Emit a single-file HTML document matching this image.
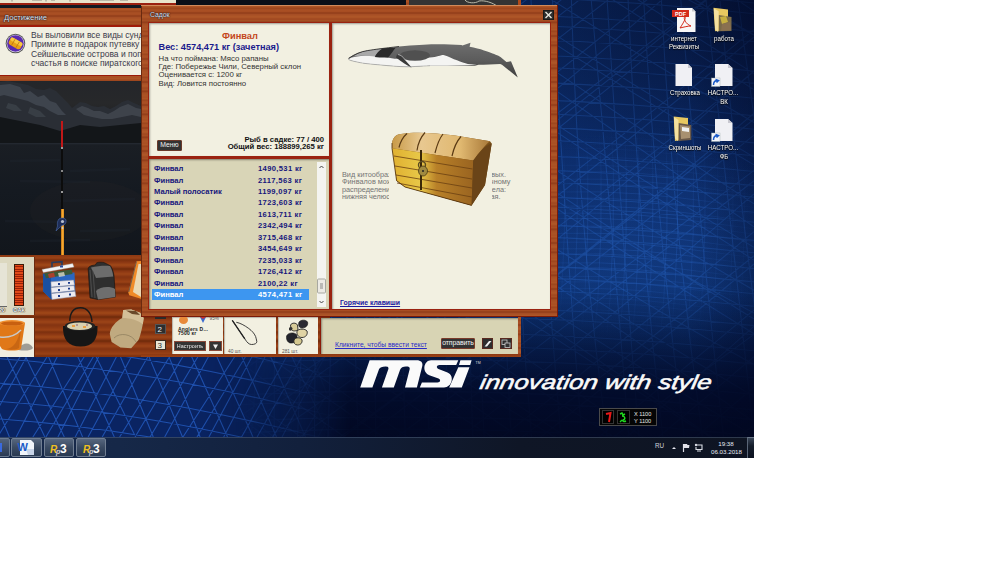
<!DOCTYPE html>
<html><head><meta charset="utf-8">
<style>
*{margin:0;padding:0;box-sizing:border-box}
html,body{width:1000px;height:562px;background:#fff;overflow:hidden;font-family:"Liberation Sans",sans-serif}
.a{position:absolute}
#scr{position:absolute;left:0;top:0;width:754px;height:458px;overflow:hidden;background:#0b2a66}
.wood{background:repeating-linear-gradient(180deg,#a84e22 0px,#b05626 2px,#9a441c 3px,#aa5024 5px,#a64c22 7px,#8a3816 8px,#a44c24 9px,#b05828 12px,#a04820 14px,#a85024 16px,#8e3a18 17px,#a64e22 19px,#ac5426 22px,#a84e22 23px)}
.woodv{background:repeating-linear-gradient(180deg,#a84e22 0px,#b05626 2px,#9a441c 3px,#aa5024 5px,#a64c22 7px,#8a3816 8px,#a44c24 9px,#b05828 12px,#a04820 14px,#a85024 16px,#8e3a18 17px,#a64e22 19px,#ac5426 22px,#a84e22 23px)}
.wood2{background:repeating-linear-gradient(180deg,#8c3812 0px,#9a4216 3px,#7c300e 5px,#8a3612 7px,#a04818 10px,#8e3a14 12px,#6e2a0a 14px,#8a3612 16px,#9c4418 19px,#843412 22px,#8c3812 24px)}
.t{white-space:nowrap;position:absolute;line-height:1}
</style></head><body>
<div id="scr">
 <!-- desktop wallpaper -->
 <div class="a" style="left:0;top:0;width:754px;height:458px;background:linear-gradient(180deg,#0a2458 0%,#0c2c6a 35%,#0d3272 70%,#0c2e6e 100%)"></div>
 <svg class="a" style="left:0;top:0" width="754" height="437"><path d="M-153.4 0 Q-194.2 220 -236.0 437 M-136.4 0 Q-169.9 220 -219.7 437 M-117.5 0 Q-150.2 220 -201.8 437 M-95.5 0 Q-133.7 220 -175.6 437 M-76.6 0 Q-101.5 220 -153.3 437 M-59.2 0 Q-86.1 220 -123.3 437 M-37.4 0 Q-66.5 220 -97.6 437 M-22.6 0 Q-43.4 220 -88.8 437 M-2.8 0 Q-34.2 220 -65.6 437 M21.5 0 Q-7.2 220 -34.1 437 M39.1 0 Q14.7 220 -14.1 437 M53.5 0 Q25.0 220 -1.5 437 M77.4 0 Q56.4 220 27.5 437 M95.7 0 Q76.3 220 48.5 437 M116.4 0 Q102.3 220 71.8 437 M133.6 0 Q117.9 220 99.4 437 M153.8 0 Q135.6 220 124.1 437 M167.9 0 Q152.8 220 137.8 437 M187.2 0 Q174.5 220 151.5 437 M210.3 0 Q203.5 220 184.7 437 M231.0 0 Q218.3 220 210.1 437 M247.8 0 Q240.5 220 226.7 437 M268.7 0 Q268.7 220 251.2 437 M286.3 0 Q273.3 220 274.3 437 M305.2 0 Q308.3 220 297.6 437 M321.3 0 Q315.8 220 314.4 437 M338.2 0 Q335.0 220 328.0 437 M357.9 0 Q349.6 220 358.1 437 M377.0 0 Q373.0 220 375.7 437 M402.0 0 Q396.9 220 405.3 437 M418.4 0 Q427.3 220 428.8 437 M439.9 0 Q440.5 220 448.9 437 M454.9 0 Q466.2 220 472.8 437 M472.2 0 Q473.3 220 484.1 437 M491.9 0 Q499.2 220 511.2 437 M511.1 0 Q512.1 220 531.5 437 M531.0 0 Q542.2 220 560.9 437 M552.5 0 Q564.4 220 581.9 437 M571.4 0 Q577.2 220 607.1 437 M591.2 0 Q611.4 220 628.9 437 M607.1 0 Q620.8 220 639.0 437 M628.1 0 Q637.7 220 662.8 437 M643.7 0 Q656.0 220 684.2 437 M661.4 0 Q672.3 220 702.5 437 M680.8 0 Q698.8 220 723.5 437 M706.0 0 Q729.6 220 754.1 437 M720.0 0 Q740.3 220 773.0 437 M738.0 0 Q767.5 220 801.4 437 M759.7 0 Q784.8 220 815.7 437 M775.8 0 Q799.7 220 836.5 437 M800.6 0 Q823.3 220 862.3 437 M820.6 0 Q850.5 220 887.0 437 M836.3 0 Q859.2 220 909.8 437 M0 -435.2 Q377 -667.0 754 -987.4 M0 -420.4 Q377 -677.1 754 -993.7 M0 -393.3 Q377 -641.7 754 -942.1 M0 -375.7 Q377 -639.6 754 -923.2 M0 -347.2 Q377 -579.5 754 -894.9 M0 -326.8 Q377 -564.8 754 -897.7 M0 -307.8 Q377 -565.0 754 -886.7 M0 -290.7 Q377 -551.7 754 -860.4 M0 -262.1 Q377 -489.2 754 -824.2 M0 -237.6 Q377 -463.2 754 -779.4 M0 -221.4 Q377 -485.3 754 -792.3 M0 -201.0 Q377 -465.8 754 -756.1 M0 -172.0 Q377 -405.0 754 -732.8 M0 -152.5 Q377 -387.5 754 -729.1 M0 -130.4 Q377 -359.9 754 -679.1 M0 -107.5 Q377 -358.6 754 -680.4 M0 -85.1 Q377 -343.5 754 -633.1 M0 -61.3 Q377 -316.5 754 -625.2 M0 -39.5 Q377 -278.3 754 -612.7 M0 -25.7 Q377 -293.2 754 -569.5 M0 3.1 Q377 -264.6 754 -543.9 M0 26.8 Q377 -215.3 754 -539.2 M0 44.5 Q377 -224.0 754 -534.9 M0 70.7 Q377 -171.8 754 -488.2 M0 92.3 Q377 -161.0 754 -452.8 M0 113.3 Q377 -151.2 754 -456.7 M0 129.9 Q377 -133.0 754 -426.6 M0 151.6 Q377 -102.5 754 -423.2 M0 180.1 Q377 -77.2 754 -381.6 M0 198.8 Q377 -31.0 754 -364.3 M0 224.2 Q377 -25.7 754 -334.5 M0 242.2 Q377 -31.8 754 -320.2 M0 260.8 Q377 -14.0 754 -287.2 M0 282.7 Q377 31.4 754 -268.3 M0 308.6 Q377 49.9 754 -250.7 M0 330.6 Q377 94.8 754 -245.2 M0 352.6 Q377 90.0 754 -216.3 M0 376.7 Q377 127.1 754 -180.8 M0 398.6 Q377 169.2 754 -163.7 M0 419.1 Q377 169.4 754 -140.4 M0 441.9 Q377 189.5 754 -116.7 M0 461.8 Q377 233.9 754 -90.3 M0 487.8 Q377 259.9 754 -81.9 M0 506.6 Q377 278.8 754 -39.8 M0 524.4 Q377 255.5 754 -37.9 M0 545.7 Q377 282.8 754 -31.3 M0 573.7 Q377 337.9 754 29.6 M0 590.5 Q377 351.4 754 37.0 M0 612.4 Q377 381.6 754 71.1 M0 635.2 Q377 407.8 754 71.1 M0 659.9 Q377 434.4 754 113.2 M0 678.6 Q377 425.2 754 119.2 M0 702.4 Q377 437.2 754 135.1 M0 728.2 Q377 454.2 754 170.4 M0 747.4 Q377 473.3 754 180.7 M0 771.2 Q377 521.9 754 193.8 M0 796.9 Q377 561.3 754 255.7 M0 810.0 Q377 548.3 754 231.6 M0 838.8 Q377 577.3 754 264.0 M0 857.2 Q377 627.8 754 310.0 M0 877.6 Q377 610.1 754 334.4 M0 902.7 Q377 662.7 754 326.3 M0 919.6 Q377 679.0 754 356.6 M0 941.7 Q377 713.6 754 387.1 M0 971.0 Q377 700.2 754 425.3 M0 -994.3 Q377 -676.2 754 -476.2 M0 -969.6 Q377 -667.0 754 -432.5 M0 -948.3 Q377 -666.9 754 -427.2 M0 -926.6 Q377 -646.1 754 -420.2 M0 -906.5 Q377 -621.4 754 -394.0 M0 -881.9 Q377 -569.0 754 -370.4 M0 -858.0 Q377 -574.1 754 -344.1 M0 -840.8 Q377 -553.3 754 -340.2 M0 -811.7 Q377 -509.1 754 -304.1 M0 -792.3 Q377 -470.5 754 -288.0 M0 -766.8 Q377 -470.2 754 -247.0 M0 -744.7 Q377 -450.0 754 -224.4 M0 -724.1 Q377 -400.0 754 -210.4 M0 -700.7 Q377 -390.3 754 -175.2 M0 -683.0 Q377 -390.6 754 -180.8 M0 -663.7 Q377 -385.2 754 -134.1 M0 -640.4 Q377 -357.3 754 -137.1 M0 -612.6 Q377 -294.1 754 -85.8 M0 -596.2 Q377 -309.1 754 -84.5 M0 -572.4 Q377 -289.5 754 -54.6 M0 -552.4 Q377 -229.3 754 -13.5 M0 -527.5 Q377 -240.3 754 11.1 M0 -507.9 Q377 -215.1 754 -7.9 M0 -485.2 Q377 -186.5 754 34.9 M0 -465.0 Q377 -164.8 754 35.2 M0 -442.4 Q377 -162.9 754 73.6 M0 -422.6 Q377 -146.5 754 89.6 M0 -398.7 Q377 -94.4 754 122.5 M0 -371.5 Q377 -63.6 754 157.1 M0 -348.2 Q377 -53.7 754 164.8 M0 -325.2 Q377 -42.7 754 203.8 M0 -306.6 Q377 -29.4 754 226.8 M0 -282.1 Q377 24.3 754 247.3 M0 -260.9 Q377 21.1 754 260.1 M0 -242.0 Q377 74.8 754 290.2 M0 -216.7 Q377 87.5 754 319.0 M0 -196.2 Q377 113.5 754 313.0 M0 -180.7 Q377 101.0 754 333.7 M0 -158.0 Q377 158.8 754 364.4 M0 -130.7 Q377 175.6 754 396.5 M0 -110.1 Q377 165.1 754 421.8 M0 -85.5 Q377 214.6 754 435.9 M0 -64.4 Q377 213.9 754 465.1 M0 -46.5 Q377 232.2 754 464.1 M0 -19.7 Q377 265.6 754 509.9 M0 4.8 Q377 304.5 754 520.1 M0 21.8 Q377 331.0 754 552.5 M0 45.2 Q377 352.3 754 548.3 M0 62.5 Q377 350.2 754 592.2 M0 86.0 Q377 389.4 754 586.5 M0 105.6 Q377 394.0 754 632.5 M0 133.9 Q377 442.7 754 645.6 M0 154.2 Q377 452.4 754 672.8 M0 172.2 Q377 491.9 754 680.2 M0 202.8 Q377 524.6 754 703.5 M0 219.6 Q377 535.6 754 758.3 M0 241.5 Q377 529.9 754 749.9 M0 268.5 Q377 554.0 754 791.7 M0 282.4 Q377 583.6 754 820.5 M0 304.3 Q377 620.3 754 824.7 M0 333.9 Q377 644.0 754 843.1 M0 356.0 Q377 655.3 754 857.0 M0 369.0 Q377 668.6 754 887.1 M0 394.0 Q377 676.1 754 907.8 M0 416.2 Q377 733.2 754 916.2 M0 442.5 Q377 759.5 754 947.3 M0 466.3 Q377 776.9 754 1002.3 M0 481.9 Q377 775.5 754 997.6 M0 511.0 Q377 815.4 754 1025.4 M0 527.3 Q377 816.0 754 1029.2 M0 -10.4 Q377 -55.4 754 -15.4 M0 8.0 Q377 -37.0 754 3.0 M0 18.7 Q377 -26.3 754 13.7 M0 36.6 Q377 -8.4 754 31.6 M0 46.5 Q377 1.5 754 41.5 M0 60.6 Q377 15.6 754 55.6 M0 76.1 Q377 31.1 754 71.1 M0 88.1 Q377 43.1 754 83.1 M0 103.2 Q377 58.2 754 98.2 M0 120.7 Q377 75.7 754 115.7 M0 134.3 Q377 89.3 754 129.3 M0 147.9 Q377 102.9 754 142.9 M0 160.8 Q377 115.8 754 155.8 M0 176.5 Q377 131.5 754 171.5 M0 190.6 Q377 145.6 754 185.6 M0 202.3 Q377 157.3 754 197.3 M0 217.3 Q377 172.3 754 212.3 M0 227.3 Q377 182.3 754 222.3 M0 245.4 Q377 200.4 754 240.4 M0 257.7 Q377 212.7 754 252.7 M0 273.5 Q377 228.5 754 268.5 M0 286.9 Q377 241.9 754 281.9 M0 298.7 Q377 253.7 754 293.7 M0 311.3 Q377 266.3 754 306.3 M0 330.6 Q377 285.6 754 325.6 M0 339.8 Q377 294.8 754 334.8 M0 355.8 Q377 310.8 754 350.8 M0 369.1 Q377 324.1 754 364.1 M0 382.8 Q377 337.8 754 377.8 M0 399.4 Q377 354.4 754 394.4 M0 414.9 Q377 369.9 754 409.9 M0 424.6 Q377 379.6 754 419.6 M0 440.9 Q377 395.9 754 435.9 M0 452.8 Q377 407.8 754 447.8 M0 468.3 Q377 423.3 754 463.3 M0 481.4 Q377 436.4 754 476.4" stroke="#2a66c8" stroke-width="1.1" fill="none" opacity=".34"/></svg>
 <svg class="a" style="left:0;top:0;-webkit-mask-image:radial-gradient(ellipse 140px 110px at 640px 235px,#000 30%,transparent 100%);mask-image:radial-gradient(ellipse 140px 110px at 640px 235px,#000 30%,transparent 100%)" width="754" height="437"><path d="M521 110.4 Q600 104.4 680 114.4 T754 124.4 M521 117.7 Q600 111.7 680 121.7 T754 131.7 M521 124.9 Q600 118.9 680 128.9 T754 138.9 M521 132.3 Q600 126.3 680 136.3 T754 146.3 M521 138.7 Q600 132.7 680 142.7 T754 152.7 M521 146.3 Q600 140.3 680 150.3 T754 160.3 M521 150.6 Q600 144.6 680 154.6 T754 164.6 M521 158.9 Q600 152.9 680 162.9 T754 172.9 M521 167.3 Q600 161.3 680 171.3 T754 181.3 M521 173.4 Q600 167.4 680 177.4 T754 187.4 M521 181.2 Q600 175.2 680 185.2 T754 195.2 M521 185.8 Q600 179.8 680 189.8 T754 199.8 M521 193.9 Q600 187.9 680 197.9 T754 207.9 M521 200.2 Q600 194.2 680 204.2 T754 214.2 M521 208.1 Q600 202.1 680 212.1 T754 222.1 M521 215.2 Q600 209.2 680 219.2 T754 229.2 M521 220.5 Q600 214.5 680 224.5 T754 234.5 M521 228.2 Q600 222.2 680 232.2 T754 242.2 M521 235.3 Q600 229.3 680 239.3 T754 249.3 M521 244.2 Q600 238.2 680 248.2 T754 258.2 M521 250.8 Q600 244.8 680 254.8 T754 264.8 M521 256.0 Q600 250.0 680 260.0 T754 270.0 M521 264.9 Q600 258.9 680 268.9 T754 278.9 M521 269.9 Q600 263.9 680 273.9 T754 283.9 M521 278.4 Q600 272.4 680 282.4 T754 292.4 M521 283.9 Q600 277.9 680 287.9 T754 297.9 M521 290.5 Q600 284.5 680 294.5 T754 304.5 M521 300.1 Q600 294.1 680 304.1 T754 314.1 M521 305.1 Q600 299.1 680 309.1 T754 319.1 M521 312.1 Q600 306.1 680 316.1 T754 326.1 M521 321.4 Q600 315.4 680 325.4 T754 335.4 M521 328.1 Q600 322.1 680 332.1 T754 342.1 M521 333.4 Q600 327.4 680 337.4 T754 347.4 M521 342.4 Q600 336.4 680 346.4 T754 356.4 M521 348.1 Q600 342.1 680 352.1 T754 362.1 M521 355.5 Q600 349.5 680 359.5 T754 369.5 M519.8 110 Q527.8 230 513.8 360 M535.8 110 Q543.8 230 529.8 360 M547.8 110 Q555.8 230 541.8 360 M561.9 110 Q569.9 230 555.9 360 M574.6 110 Q582.6 230 568.6 360 M585.2 110 Q593.2 230 579.2 360 M598.4 110 Q606.4 230 592.4 360 M610.7 110 Q618.7 230 604.7 360 M623.6 110 Q631.6 230 617.6 360 M636.3 110 Q644.3 230 630.3 360 M650.2 110 Q658.2 230 644.2 360 M664.4 110 Q672.4 230 658.4 360 M675.0 110 Q683.0 230 669.0 360 M690.7 110 Q698.7 230 684.7 360 M702.4 110 Q710.4 230 696.4 360 M715.2 110 Q723.2 230 709.2 360 M730.3 110 Q738.3 230 724.3 360 M741.9 110 Q749.9 230 735.9 360 M754.3 110 Q762.3 230 748.3 360 M767.9 110 Q775.9 230 761.9 360" stroke="#2a62c0" stroke-width="1" fill="none" opacity=".3"/></svg>
 <div class="a" style="left:0;top:350px;width:340px;height:87px;overflow:hidden;background:#0a2462;-webkit-mask-image:linear-gradient(90deg,#000 0,#000 230px,transparent 340px);mask-image:linear-gradient(90deg,#000 0,#000 230px,transparent 340px)"><svg class="a" style="left:0;top:-350px" width="340" height="437"><path d="M-90.3 437 L-39.6 350 M-72.5 437 L-22.9 350 M-60.0 437 L-8.9 350 M-46.9 437 L3.3 350 M-29.2 437 L24.3 350 M-17.4 437 L30.2 350 M-2.5 437 L51.3 350 M16.2 437 L60.7 350 M32.9 437 L88.5 350 M45.9 437 L97.3 350 M57.9 437 L102.1 350 M75.2 437 L119.9 350 M88.1 437 L135.0 350 M102.2 437 L151.7 350 M119.6 437 L173.8 350 M135.1 437 L186.8 350 M150.0 437 L201.9 350 M164.7 437 L212.1 350 M183.0 437 L238.9 350 M197.0 437 L249.5 350 M208.9 437 L255.6 350 M223.7 437 L268.6 350 M241.6 437 L290.4 350 M257.1 437 L305.7 350 M272.7 437 L326.9 350 M282.0 437 L328.5 350 M302.5 437 L352.1 350 M317.9 437 L366.7 350 M327.4 437 L379.0 350 M346.7 437 L393.9 350 M357.5 437 L405.5 350 M377.8 437 L430.9 350 M387.7 437 L434.7 350 M402.6 437 L447.3 350 M421.8 437 L467.9 350 M435.4 437 L484.7 350 M-98.5 350 L-58.2 437 M-75.0 350 L-35.5 437 M-51.1 350 L-13.9 437 M-26.3 350 L9.4 437 M3.8 350 L44.8 437 M22.4 350 L64.3 437 M45.7 350 L82.6 437 M74.8 350 L114.3 437 M92.8 350 L135.7 437 M117.7 350 L153.3 437 M146.2 350 L182.5 437 M166.4 350 L200.1 437 M188.7 350 L227.5 437 M213.9 350 L253.0 437 M239.0 350 L276.5 437 M267.7 350 L305.5 437 M288.6 350 L330.3 437 M309.5 350 L344.0 437 M339.3 350 L380.4 437 M358.0 350 L392.9 437 M385.9 350 L428.3 437 M405.6 350 L448.1 437 M435.1 350 L474.1 437 M455.4 350 L489.4 437 M-10 276.3 Q150 286.3 340 336.3 M-10 303.7 Q150 313.7 340 363.7 M-10 317.9 Q150 327.9 340 377.9 M-10 341.6 Q150 351.6 340 401.6 M-10 358.1 Q150 368.1 340 418.1 M-10 382.6 Q150 392.6 340 442.6 M-10 400.8 Q150 410.8 340 460.8 M-10 418.3 Q150 428.3 340 478.3 M-10 437.4 Q150 447.4 340 497.4 M-10 461.8 Q150 471.8 340 521.8 M-10 476.6 Q150 486.6 340 536.6" stroke="#2d6ee0" stroke-width="1.1" fill="none" opacity=".6"/></svg></div>
 <div class="a" style="left:0;top:0;width:754px;height:437px;background:radial-gradient(ellipse 180px 120px at 640px 250px,rgba(40,100,200,.16),rgba(40,100,200,0)),radial-gradient(ellipse 280px 200px at 754px 0px,rgba(0,5,30,.55),rgba(0,5,30,0)),linear-gradient(90deg,rgba(0,5,30,0) 0,rgba(0,5,30,0) 690px,rgba(0,5,30,.35) 754px)"></div>
 <div class="a" style="left:200px;top:290px;width:554px;height:147px;background:linear-gradient(180deg,rgba(1,6,32,0) 0,rgba(1,6,32,.55) 60px,rgba(1,6,32,.85) 100px,rgba(1,5,28,.92) 147px);-webkit-mask-image:linear-gradient(90deg,transparent 0,rgba(0,0,0,.6) 100px,#000 150px);mask-image:linear-gradient(90deg,transparent 0,rgba(0,0,0,.6) 100px,#000 150px)"></div>

 <!-- game window -->
 <div id="game" class="a" style="left:0;top:0;width:521px;height:357px;overflow:hidden">
  <!-- top strip -->
  <div class="a" style="left:0;top:0;width:176px;height:3px;background:#e9e5cc"></div>
  <svg class="a" style="left:0;top:0" width="176" height="3"><path d="M12 0 v1.5 M32 0 h10 M46 0 v1.5 M51 0 h4 M70 0 v1.6 M90 0 h24 M120 0 h8" stroke="#555" stroke-width="1" opacity=".6"/></svg>
  <div class="a" style="left:0;top:3px;width:176px;height:2px;background:#9a2010"></div>
  <div class="a" style="left:176px;top:0;width:230px;height:5px;background:#0b0f18"></div>
  <div class="a woodv" style="left:406px;top:0;width:3px;height:5px"></div>
  <div class="a" style="left:409px;top:0;width:109px;height:5px;background:#343434"></div>
  <svg class="a" style="left:409px;top:0" width="109" height="6"><path d="M56 0 C58 3 66 4 70 1 C76 0 84 3 88 6" stroke="#b8b8a8" stroke-width="1" fill="none"/></svg>
  <div class="a" style="left:518px;top:0;width:3px;height:5px;background:#b04a1a"></div>
  <div class="a" style="left:0;top:5px;width:176px;height:3px;background:#121a22"></div>
  <!-- achievement -->
  <div class="a wood" style="left:0;top:8px;width:330px;height:73px"></div>
  <div class="t" style="left:4px;top:13.5px;font-size:7.6px;color:#e8e8ea;text-shadow:0 0 1px #1a1a2a,0 0 1px #1a1a2a,0 0 1.5px #1a1a2a">Достижение</div>
  <div class="a" style="left:0;top:25px;width:330px;height:2px;background:#a01a08"></div>
  <div class="a" style="left:0;top:27px;width:330px;height:48px;background:#f1efe2"></div>
  <div class="a" style="left:0;top:75px;width:330px;height:1px;background:#9a1a08"></div>
  <svg class="a" style="left:4px;top:32px" width="23" height="23">
   <circle cx="11.45" cy="11.45" r="10.3" fill="#f4f2e6"/>
   <circle cx="11.45" cy="11.45" r="9.8" fill="#5a5a5a"/>
   <circle cx="11.45" cy="11.45" r="8.8" fill="#e8e4f0"/>
   <circle cx="11.45" cy="11.45" r="8.3" fill="#5a2ab0"/>
   <g transform="rotate(30 11.45 11.45)"><rect x="4.8" y="7.6" width="13.4" height="7.8" rx="3" fill="#e8a018"/><rect x="4.8" y="7.6" width="13.4" height="3.6" rx="1.8" fill="#f8c840"/><path d="M9 8 v7 M14 8 v7" stroke="#b87010" stroke-width=".7"/></g>
  </svg>
  <div class="t" style="left:31px;top:31px;font-size:8.5px;line-height:9.35px;color:#3a3a4a">Вы выловили все виды сундуков!<br>Примите в подарок путевку на<br>Сейшельские острова и попытайте<br>счастья в поиске пиратского клада.</div>
  <!-- game scene -->
  <div class="a" style="left:0;top:81px;width:141px;height:174px;background:linear-gradient(180deg,#24262a 0,#27282a 22px,#1c1e22 45px,#131518 62px,#1a1e24 64px,#151a21 110px,#12161c 174px)"></div>
  <svg class="a" style="left:0;top:81px" width="141" height="174">
   <path d="M0 1 L8 0 L18 2 L28 4 L36 8 L44 9 L50 7 L56 10 L62 16 L68 22 L72 27 L76 24 L80 21 L86 22 L92 25 L98 26 L104 25 L110 28 L116 25 L122 21 L128 19 L134 22 L141 25 L141 62 L0 62Z" fill="#2a2e35"/>
   <path d="M0 4 L10 3 L20 6 L24 12 L30 10 L38 16 L44 14 L50 20 L56 22 L62 30 L66 34 L58 34 L50 30 L44 26 L36 24 L28 20 L20 18 L12 16 L4 14 L0 15Z" fill="#464c55" opacity=".75"/>
   <path d="M8 22 L16 24 L22 30 L14 30 L6 27Z M30 26 L40 30 L46 36 L36 36 L28 32Z" fill="#3c424a" opacity=".8"/>
   <path d="M76 28 L82 25 L88 27 L94 30 L100 30 L108 33 L114 30 L120 26 L128 23 L136 27 L141 28 L141 36 L132 34 L122 36 L112 38 L102 38 L92 36 L84 34Z" fill="#474d56" opacity=".7"/>
   <path d="M0 36 L20 40 L40 44 L60 50 L80 44 L100 46 L120 44 L141 42 L141 62 L0 62Z" fill="#131619"/>
   <rect x="0" y="62" width="141" height="1.5" fill="#232830"/>
   <ellipse cx="90" cy="130" rx="60" ry="30" fill="#3a3028" opacity=".12"/><path d="M10 80 L60 79 M70 90 L130 88 M20 100 L90 101 M60 120 L135 118 M5 140 L70 141 M80 150 L130 149 M30 160 L90 159" stroke="#1f2630" stroke-width="2.5" opacity=".35"/>
  </svg>
  <!-- rod -->
  <div class="a" style="left:61px;top:121px;width:1.6px;height:26px;background:#c01818"></div>
  <div class="a" style="left:61px;top:147px;width:1.6px;height:62px;background:#0c0c0c"></div>
  <div class="a" style="left:60.5px;top:147px;width:2.5px;height:2px;background:#999"></div>
  <div class="a" style="left:60.5px;top:170px;width:2.5px;height:2px;background:#888"></div>
  <div class="a" style="left:60.5px;top:191px;width:2.5px;height:2px;background:#999"></div>
  <div class="a" style="left:60.6px;top:209px;width:3px;height:46px;background:linear-gradient(90deg,#c07010,#f4a830,#d88a20)"></div>
  <svg class="a" style="left:53px;top:216px" width="16" height="18"><path d="M6 3 C8 1.5 12 1.5 13 4 C13.5 7 12 9 9 9.5 L6 12 L3 15 L4.5 10 C4 7 4.5 5 6 3Z" fill="#1e2e5a" stroke="#4a6aa8" stroke-width=".6"/><circle cx="9.5" cy="5.5" r="1.6" fill="#b8c0d0"/><circle cx="9.5" cy="12" r="1" fill="#ccc"/></svg>
  <!-- shelf -->
  <div class="a wood2" style="left:0;top:255px;width:330px;height:102px"></div>
  <div class="a" style="left:0;top:257px;width:34.3px;height:58px;background:#dcd8c0;box-shadow:1px 0 0 #6a2a10"></div>
  <div class="a" style="left:0;top:263.3px;width:6.5px;height:43.5px;background:#e6e4d6;border-bottom:1px solid #666"></div>
  <div class="a" style="left:14.4px;top:264.2px;width:9.6px;height:41.7px;border:1px solid #3a1a08;background:repeating-linear-gradient(180deg,#e04a18 0 1.4px,#9a2008 1.4px 2.4px)"></div>
  <div class="t" style="left:-1px;top:307.6px;font-size:5.6px;color:#fff;font-weight:bold;text-shadow:0 0 1px #000,0 0 1px #000">20</div>
  <div class="t" style="left:13.2px;top:307.6px;font-size:5.6px;color:#fff;font-weight:bold;text-shadow:0 0 1px #000,0 0 1px #000">ОАК</div>
  <div class="a" style="left:0;top:318px;width:34.3px;height:38.8px;background:#f0eee0;box-shadow:1px 0 0 #6a2a10"></div>
  <svg class="a" style="left:0;top:318px" width="35" height="39">
   <path d="M18 30 C24 24 30 24 33 30 C31 33 24 33 18 32Z" fill="#5a5a5a" opacity=".55"/>
   <path d="M0 5 L25 5 L21 31 C18 33 6 33 2 31 L0 28Z" fill="#e07818"/>
   <path d="M21 9 L19 30 C16 32 10 32 6 31 C14 30 18 24 21 9Z" fill="#b85a10" opacity=".6"/>
   <ellipse cx="12" cy="5" rx="13" ry="3" fill="#f09030"/>
   <ellipse cx="12" cy="5.5" rx="11" ry="2" fill="#c86010"/>
   <path d="M0 19 C8 20 16 17 21 12" stroke="#c8c8c8" stroke-width="1.6" fill="none"/>
  </svg>
  <!-- items -->
  <svg class="a" style="left:40px;top:258px" width="105" height="95">
   <!-- tackle box -->
   <path d="M12 10 L12 4.5 L22 3.6 L22 9" stroke="#2a3a5a" stroke-width="1.6" fill="none"/>
   <path d="M2.9 15.8 L34.5 14.5 L35.4 35.4 L11.4 41.6 L3.3 33.6Z" fill="#2a66c0"/>
   <path d="M2.9 15.8 L11 17 L11.4 41.6 L3.3 33.6Z" fill="#1a50a0"/>
   <path d="M4.2 15 L31.8 11.4 L32.5 16 L6 20.3Z" fill="#3a5a3a"/>
   <path d="M8 16 L14 14.5 L15 19 L9 20Z" fill="#c83a2a" opacity=".8"/>
   <path d="M18 15 L24 14 L25 18 L19 19Z" fill="#d8d8c8" opacity=".8"/>
   <path d="M2 11.4 L32.7 5.6 L34 9.1 L3.3 14.5Z" fill="#f4f4f6" stroke="#999" stroke-width=".4"/>
   <rect x="20" y="7.5" width="3" height="2" fill="#2a4a9a"/>
   <path d="M10.9 23.8 L33.6 22 L34.5 27 L11.2 29Z M11 29.6 L34 27.6 L34.8 32.6 L11.4 35Z M11.4 35.6 L35 33.2 L36 38.4 L12 41.5Z" fill="#ececf2" stroke="#8a8a9a" stroke-width=".5"/>
   <path d="M18 26 h2 M28 24.8 h2 M18 32 h2 M28 30.6 h2 M18 38 h2 M29 36.5 h2" stroke="#1a3a8a" stroke-width="1.8"/>
   <!-- backpack -->
   <path d="M48.2 11.4 C48 9 50 7.5 55.4 6.9 C56 5 57 4.2 60 4.2 C62 4.2 64 4.4 64.3 4.7 L70.5 7.8 C72 10 73.5 14 74 17.6 L75.4 39 L58 41.6 L50 39.9 Z" fill="#2e2e2e" stroke="#111" stroke-width=".6"/>
   <path d="M51 9.6 C58 7.6 66 7.4 70 8 C72 12 73 15 73.2 18.5 L56 20 C54 15 52 12 51 9.6Z" fill="#6c6c6c"/>
   <path d="M56 33 C60 28.5 70 28 75 31 L75.4 39 L58 41.6 Z" fill="#6e6e6e"/>
   <path d="M50 12 L52 39 M53 13 L55 40" stroke="#555" stroke-width=".8"/>
   <!-- notebook -->
   <path d="M88.3 34.5 L96.3 3.3 L101 2.9 L101 40.7 L89.2 37.2Z" fill="#f08a28"/>
   <path d="M93 34 L98.5 6 L101 6 L101 39 Z" fill="#ead8b4"/>
   <path d="M88.8 34 L96.5 3.5" stroke="#555" stroke-width=".8"/>
   <!-- cauldron -->
   <path d="M29.8 63.1 C30 54 34 49.8 40.5 49.8 C47 49.8 51.5 55 52 64" stroke="#1a1a1a" stroke-width="1.4" fill="none"/>
   <path d="M23 68 C22.5 81 28 88.5 40.5 88.5 C53 88.5 58 81 57.5 68 Z" fill="#161616"/>
   <ellipse cx="40" cy="68" rx="15.2" ry="4.9" fill="#222"/>
   <ellipse cx="39.5" cy="68.3" rx="12.5" ry="3.8" fill="#d8d0b0"/>
   <path d="M32 68 h3 M43 69 h3" stroke="#f09020" stroke-width="1.4"/>
   <path d="M36 67 h2 M46 67 h2" stroke="#8a5a7a" stroke-width="1.2"/>
   <!-- sack -->
   <path d="M69.8 76 C70 70 76 63 82.3 60 L83.2 52 L91.2 51.6 L100.1 54.7 L103.7 60 L102.8 66.3 C101 75 99 82 98.3 82.3 L91.2 90.3 L80.5 89.4 L71.6 84 Z" fill="#c0aa80"/>
   <path d="M83.2 52 L91.2 51.6 L100.1 54.7 L103.7 60 L102.8 66.3 C98 62 90 60 82.3 60Z" fill="#d4c098"/>
   <path d="M86 52.5 L96 53 L100 57 L92 56Z" fill="#6a4a2a"/>
   <path d="M74 80 C80 74 92 76 96 84" stroke="#8a7a5a" stroke-width=".7" fill="none"/>
  </svg>
  <!-- below sadok: buttons & tackle panels -->
  <div class="a" style="left:155px;top:317px;width:11px;height:2px;background:#2a2a2a"></div>
  <div class="a" style="left:155px;top:324px;width:11px;height:10px;background:#2e2e2e;border:1px solid #555"></div>
  <div class="t" style="left:157.5px;top:325.5px;font-size:8px;color:#eee">2</div>
  <div class="a" style="left:155px;top:340px;width:11px;height:10px;background:#e8e6d6;border:1px solid #3a2a20"></div>
  <div class="t" style="left:157.5px;top:341.5px;font-size:8px;color:#333">3</div>
  <div class="a" style="left:171.8px;top:316.8px;width:51.6px;height:37px;background:#f2f0e1;box-shadow:inset 1px 1px 1px rgba(0,0,0,.25)"></div>
  <div class="a" style="left:224.2px;top:316.8px;width:51.6px;height:37px;background:#f2f0e1;box-shadow:inset 1px 1px 1px rgba(0,0,0,.25)"></div>
  <div class="a" style="left:278.1px;top:316.8px;width:40px;height:37px;background:#f2f0e1;box-shadow:inset 1px 1px 1px rgba(0,0,0,.25)"></div>
  <div class="a" style="left:179px;top:316px;width:9px;height:8px;border-radius:50%;background:#e88a3a"></div>
  <svg class="a" style="left:199px;top:316px" width="8" height="8"><path d="M1 1 L7 1 L4 7Z" fill="#3a6ad0"/><path d="M1 1 L7 1 L4 3Z" fill="#c83030"/></svg>
  <div class="t" style="left:209.6px;top:317px;font-size:4.6px;color:#555">95%</div>
  <div class="t" style="left:178px;top:326.5px;font-size:5px;font-weight:bold;color:#1a1a1a;line-height:4.8px;letter-spacing:.2px">Anglers D...<br>7500 кг</div>
  <div class="a" style="left:174.2px;top:340.5px;width:32px;height:10.5px;background:#333;border:1px solid #8a4a3a"></div>
  <div class="t" style="left:174.2px;top:342.6px;width:32px;text-align:center;font-size:6px;color:#eee;transform:scaleX(.9)">Настроить</div>
  <div class="a" style="left:209.3px;top:340.5px;width:12.3px;height:10.5px;background:#333;border:1px solid #8a4a3a"></div>
  <svg class="a" style="left:209.3px;top:340.5px" width="13" height="11"><path d="M4 3.5 L9 3.5 L6.5 8Z" fill="#eee"/></svg>
  <svg class="a" style="left:224px;top:316px" width="52" height="38"><path d="M8.3 4.3 L20.8 22.8 C23 26.5 25 28.5 27.6 28.5 C30.5 28.5 33 27.5 32.8 25.5 C32.5 23.5 32 22 31.6 20.5 C30 17 28 15 24.8 12.5 C20 9 16 7 12.3 6.3" stroke="#2a2a2a" stroke-width=".9" fill="none"/><path d="M8.3 4.3 L20.8 22.8" stroke="#222" stroke-width="1.3"/></svg>
  <div class="t" style="left:228px;top:349.8px;font-size:4.8px;color:#555">40 шт.</div>
  <svg class="a" style="left:277px;top:317px" width="43" height="37">
   <path d="M22 5 C24 2.5 29 2.5 30.5 5 C31.5 8 29 11 25 11 C22 11 21 8 22 5Z" fill="#2a2a32" stroke="#111" stroke-width=".6"/>
   <path d="M13.5 8 C15 5.5 19 5.5 20.5 8 L21 12.5 C19 14.5 15 14.5 14 12Z" fill="#d8cc98" stroke="#222" stroke-width=".9"/>
   <path d="M20 14 C22 11.5 28 11.5 30 14 C31 17 29 20.5 25 20.5 C21 20.5 19.5 17 20 14Z" fill="#e0d4a4" stroke="#222" stroke-width=".9"/>
   <path d="M9.6 19 C11 15.5 17 15 19.5 17.5 C21 21 19.5 25.5 15 26 C11 26.5 9 23 9.6 19Z" fill="#22242c" stroke="#111" stroke-width=".6"/>
   <path d="M17 23 C18.5 20 23.5 20 25 23 C25.5 26 23.5 28 20.5 28 C17.5 28 16.5 25.5 17 23Z" fill="#d4c890" stroke="#222" stroke-width=".9"/>
   <path d="M12 11 C13 9.5 15 9.5 15.5 11.5 C15.5 13.5 13 14.5 12 13Z" fill="#333"/>
  </svg>
  <div class="t" style="left:282px;top:349.8px;font-size:4.8px;color:#555">281 шт.</div>
  <!-- chat -->
  <div class="a" style="left:320px;top:317px;width:1px;height:38px;background:#8a1a08"></div>
  <div class="a" style="left:321px;top:317.5px;width:197px;height:37.5px;background:#d8d4b4;box-shadow:inset 1px 1px 2px rgba(0,0,0,.35)"></div>
  <div class="a wood" style="left:518px;top:317px;width:3px;height:40px"></div>
  <div class="a wood2" style="left:141px;top:354px;width:380px;height:3px"></div>
  <div class="t" style="left:335px;top:342px;font-size:6.7px;color:#2a2ac8;text-decoration:underline">Кликните, чтобы ввести текст</div>
  <div class="a" style="left:441px;top:338px;width:34px;height:11px;background:#333;border:1px solid #7a3a2a;border-radius:1px"></div>
  <div class="t" style="left:441px;top:339.8px;width:34px;text-align:center;font-size:6.9px;color:#f4f4f4;letter-spacing:-.1px">отправить</div>
  <div class="a" style="left:481.5px;top:338px;width:11.5px;height:11px;background:#2e2e2e;border:1px solid #5a2a20"></div>
  <svg class="a" style="left:481.5px;top:338px" width="12" height="11"><path d="M2.5 8.5 L7 3 L9.5 3 L5 8.5Z" fill="#f0f0f0"/></svg>
  <div class="a" style="left:500px;top:338px;width:12px;height:11px;background:#2e2e2e;border:1px solid #5a2a20"></div>
  <svg class="a" style="left:500px;top:338px" width="12" height="11"><rect x="2" y="2" width="5" height="4.5" fill="none" stroke="#ccc" stroke-width=".8"/><rect x="5" y="5" width="5" height="4.5" fill="#333" stroke="#ccc" stroke-width=".8"/></svg>

 </div>

 <!-- Sadok window -->
 <div id="sadok" class="a wood" style="left:141px;top:5px;width:417px;height:312px;box-shadow:inset -1px 0 0 #7a1a08, inset 0 -1px 0 #7a1a08, inset 0 1px 0 #d08a5a, inset 1px 0 0 #6a2a10">
  <div class="t" style="left:9px;top:7px;font-size:6.8px;color:#e4e4ea;text-shadow:0 0 1px #1a1a2a,0 0 1px #1a1a2a,0 0 1.5px #1a1a2a">Садок</div>
  <div class="a" style="left:402px;top:5px;width:11px;height:10px;background:#2e2e2e;border:1px solid #1a1a1a"></div>
  <svg class="a" style="left:402px;top:5px" width="11" height="10"><path d="M2.5 2 L8.5 8 M8.5 2 L2.5 8" stroke="#e8e8e0" stroke-width="1.4"/></svg>
  <div class="a" style="left:7px;top:17px;width:403px;height:288px;background:#9a2210"></div>
  <div class="a" style="left:8px;top:18px;width:180px;height:133px;background:#f2f0e1;box-shadow:inset 1px 1px 2px rgba(0,0,0,.35)"></div>
  <div class="a" style="left:8px;top:154px;width:180px;height:150px;background:#d9d5b7;box-shadow:inset 1px 1px 2px rgba(0,0,0,.4)"></div>
  <div class="a" style="left:191px;top:18px;width:218px;height:286px;background:#f2f0e1;box-shadow:inset 1px 1px 2px rgba(0,0,0,.35)"></div>
  <!-- info -->
  <div class="t" style="left:81px;top:26.5px;font-size:9.3px;font-weight:bold;color:#c4461a">Финвал</div>
  <div class="t" style="left:17.5px;top:37.5px;font-size:9.2px;font-weight:bold;color:#1a1a8c">Вес: 4574,471 кг (зачетная)</div>
  <div class="t" style="left:17.5px;top:49.5px;font-size:7.8px;line-height:8.4px;color:#333">На что поймана: Мясо рапаны<br>Где: Побережье Чили, Северный склон<br>Оценивается с: 1200 кг<br>Вид: Ловится постоянно</div>
  <div class="a" style="left:16px;top:134.5px;width:25px;height:11px;background:#333;border:1px solid #6a3a2a;border-radius:1px"></div>
  <div class="t" style="left:16px;top:136.6px;width:25px;text-align:center;font-size:6.8px;color:#f0f0f0">Меню</div>
  <div class="t" style="right:234px;top:131px;font-size:7.7px;line-height:7.2px;font-weight:bold;color:#111;text-align:right">Рыб в садке: 77 / 400<br>Общий вес: 188899,265 кг</div>
  <!-- list -->
  <div class="t" style="left:13px;top:160.0px;font-size:7.6px;font-weight:bold;color:#16167c">Финвал</div><div class="t" style="left:117px;top:160.0px;font-size:7.6px;font-weight:bold;color:#16167c;letter-spacing:.35px">1490,531 кг</div><div class="t" style="left:13px;top:171.5px;font-size:7.6px;font-weight:bold;color:#16167c">Финвал</div><div class="t" style="left:117px;top:171.5px;font-size:7.6px;font-weight:bold;color:#16167c;letter-spacing:.35px">2117,563 кг</div><div class="t" style="left:13px;top:183.0px;font-size:7.6px;font-weight:bold;color:#16167c">Малый полосатик</div><div class="t" style="left:117px;top:183.0px;font-size:7.6px;font-weight:bold;color:#16167c;letter-spacing:.35px">1199,097 кг</div><div class="t" style="left:13px;top:194.4px;font-size:7.6px;font-weight:bold;color:#16167c">Финвал</div><div class="t" style="left:117px;top:194.4px;font-size:7.6px;font-weight:bold;color:#16167c;letter-spacing:.35px">1723,603 кг</div><div class="t" style="left:13px;top:205.9px;font-size:7.6px;font-weight:bold;color:#16167c">Финвал</div><div class="t" style="left:117px;top:205.9px;font-size:7.6px;font-weight:bold;color:#16167c;letter-spacing:.35px">1613,711 кг</div><div class="t" style="left:13px;top:217.4px;font-size:7.6px;font-weight:bold;color:#16167c">Финвал</div><div class="t" style="left:117px;top:217.4px;font-size:7.6px;font-weight:bold;color:#16167c;letter-spacing:.35px">2342,494 кг</div><div class="t" style="left:13px;top:228.9px;font-size:7.6px;font-weight:bold;color:#16167c">Финвал</div><div class="t" style="left:117px;top:228.9px;font-size:7.6px;font-weight:bold;color:#16167c;letter-spacing:.35px">3715,468 кг</div><div class="t" style="left:13px;top:240.4px;font-size:7.6px;font-weight:bold;color:#16167c">Финвал</div><div class="t" style="left:117px;top:240.4px;font-size:7.6px;font-weight:bold;color:#16167c;letter-spacing:.35px">3454,649 кг</div><div class="t" style="left:13px;top:251.8px;font-size:7.6px;font-weight:bold;color:#16167c">Финвал</div><div class="t" style="left:117px;top:251.8px;font-size:7.6px;font-weight:bold;color:#16167c;letter-spacing:.35px">7235,033 кг</div><div class="t" style="left:13px;top:263.3px;font-size:7.6px;font-weight:bold;color:#16167c">Финвал</div><div class="t" style="left:117px;top:263.3px;font-size:7.6px;font-weight:bold;color:#16167c;letter-spacing:.35px">1726,412 кг</div><div class="t" style="left:13px;top:274.8px;font-size:7.6px;font-weight:bold;color:#16167c">Финвал</div><div class="t" style="left:117px;top:274.8px;font-size:7.6px;font-weight:bold;color:#16167c;letter-spacing:.35px">2100,22 кг</div><div class="a" style="left:11px;top:283.5px;width:157px;height:11px;background:#3d96f0"></div><div class="t" style="left:13px;top:286.3px;font-size:7.6px;font-weight:bold;color:#fff">Финвал</div><div class="t" style="left:117px;top:286.3px;font-size:7.6px;font-weight:bold;color:#fff;letter-spacing:.35px">4574,471 кг</div>
  <div class="a" style="left:176px;top:157px;width:9px;height:145px;background:#f4f4f0"></div>
  <svg class="a" style="left:176px;top:157px" width="9" height="145"><path d="M2.5 6 L4.5 4 L6.5 6" stroke="#444" fill="none"/><path d="M2.5 139 L4.5 141 L6.5 139" stroke="#444" fill="none"/><rect x="0.5" y="117" width="8" height="14" rx="1" fill="#eceae4" stroke="#a8a8a0"/><path d="M3 122h3M3 124h3M3 126h3" stroke="#888"/></svg>
  <!-- right panel -->
  <div class="t" style="left:201px;top:165.5px;font-size:7.3px;line-height:7.5px;color:#747474">Вид китообразных<br>Финвалов можно<br>распределению<br>нижняя челюсть</div>
  <div class="t" style="right:52px;top:165.5px;font-size:7.3px;color:#747474">полосатиковых.</div>
  <div class="t" style="right:47.5px;top:173px;font-size:7.3px;color:#747474">асимметричному</div>
  <div class="t" style="right:52px;top:180.5px;font-size:7.3px;color:#747474">окраски тела:</div>
  <div class="t" style="right:57.5px;top:188px;font-size:7.3px;color:#747474">справа белая.</div>
  <div class="a" style="left:248px;top:122px;width:103px;height:84px;background:#f2f0e1"></div>
  <svg class="a" style="left:204px;top:31px" width="176" height="46">
   <defs><linearGradient id="wg" x1="0" y1="0" x2="0" y2="1"><stop offset="0" stop-color="#6e6e6e"/><stop offset=".5" stop-color="#5c5c5c"/><stop offset="1" stop-color="#3e3e3e"/></linearGradient></defs>
   <path d="M3.6 22.3 C10 18 16 15.5 22.5 14.6 C30 13.3 38 12.4 54 10.5 C70 9 80 8.6 90 8.3 C100 8.2 108 8.6 116.5 9 L117.4 9.5 L125.5 6.8 L124.6 10.8 C130 12 135 13 139 14.4 C146 16.8 150 18 153.4 19.8 C157 22 159 24 161.5 26.1 L166 25.2 L172.8 41.4 L157 28.8 L155.2 27.9 C148 28.2 140 28.6 133.6 28.8 L130 29.7 C115 29.8 100 29.7 85 29.7 C75 30.2 70 30.6 63 30.8 C52 30.6 44 29.8 36 29 C26 28.2 18 27.4 13.5 26.3 C8 25.2 5 24.4 3.6 23.6 Z" fill="url(#wg)"/>
   <path d="M3.6 23 C5 22 6 21.6 8 21.2 C14 20 20 19.4 27 19.6 C34 20 42 21.6 49.5 22.7 C58 23 66 22.6 85 21.6 C92 20.8 96 19 98.5 18.9 C104 20 108 23 112 24.3 C116 26 120 27.4 122.8 27.9 L131.8 28.8 C115 29.8 100 29.7 85 29.7 C75 30.2 70 30.6 63 30.8 C52 30.6 44 29.8 36 29 C26 28.2 18 27.4 13.5 26.3 C8 25.2 5 24.4 3.6 23.6 Z" fill="#f4f4f2"/>
   <path d="M8 20.5 C14 17 18 15.3 22.5 14.6 C28 13.6 33 13 37.8 12.4 C34 15 31 18 29.7 20.5 C22 19.5 14 19.8 8 20.5Z" fill="#a8a8a8"/>
   <path d="M29.7 20.9 C32 17 34 14 37.8 12.4 C42 12 46 11.9 50.4 11.9 C48 15 46 18 43.2 21.4 C38 21.5 33 21.3 29.7 20.9Z" fill="#2a2a2a"/>
   <ellipse cx="70" cy="19.5" rx="15" ry="5.2" fill="#505050"/>
   <path d="M52 18.5 C55 19 57 20.5 59 23 C62 26 64.5 29 66.6 31.7 C62 29.5 57 26 51 21.5 Z" fill="#3a3a3a"/>
   <path d="M53 18.5 C56 19.2 58 20.8 59.5 23" stroke="#d8d8d8" stroke-width=".6" fill="none"/>
   <path d="M3.6 22.3 C10 18 16 15.5 22.5 14.6 C30 13.3 38 12.4 54 10.5" stroke="#222" stroke-width=".8" fill="none"/>
   <path d="M3.6 23.6 C5 24.4 8 25.2 13.5 26.3 C18 27.4 26 28.2 36 29 C44 29.8 52 30.6 63 30.8 C70 30.6 75 30.2 85 29.7" stroke="#999" stroke-width=".6" fill="none"/>
  </svg>
  <svg class="a" style="left:244px;top:120px" width="110" height="88">
   <defs>
    <linearGradient id="cf" x1="0" y1="0" x2="1" y2="0"><stop offset="0" stop-color="#e0b030"/><stop offset=".35" stop-color="#e8c848"/><stop offset=".55" stop-color="#b88028"/><stop offset="1" stop-color="#9a6420"/></linearGradient>
    <linearGradient id="cl" x1="0" y1="0" x2="1" y2="0"><stop offset="0" stop-color="#c89a48"/><stop offset=".3" stop-color="#e8c890"/><stop offset=".7" stop-color="#e0b870"/><stop offset="1" stop-color="#a87838"/></linearGradient>
   </defs>
   <path d="M7 18 C8 12 11 9.5 16 9 C30 6.5 50 8 70 10.5 L105 16.3 L106.7 18.6 L100 60 L86.6 80.4 L20 62 L11.6 55.7 Z" fill="#7a5018"/>
   <path d="M7 18 C8 12 11 9.5 16 9 C30 6.5 50 8 70 10.5 L105 16.3 C100 20 94 28 88.2 35.6 L7 23.2 Z" fill="url(#cl)"/>
   <path d="M7 23.2 L88.2 35.6 L86.6 80.4 L20 62 L11.6 55.7 Z" fill="url(#cf)"/>
   <path d="M88.2 35.6 C94 28 100 20 106.7 18.6 L100 60 L86.6 80.4 Z" fill="#6a4418"/>
   <path d="M9 31 L87.5 44 M10 41 L87 54 M11 50 L87 63 M12 58 L86.8 72" stroke="#6a4012" stroke-width="1" fill="none" opacity=".8"/>
   <path d="M22 8.5 C18 12 15 18 14 22.5 M40 7.5 C36 12 33 18 32 25.5 M58 9 C54 14 52 20 50 28 M76 11.5 C72 16 69 22 67 31" stroke="#5a3a14" stroke-width="1.2" fill="none"/>
   <path d="M36 25 L36 65" stroke="#3a2808" stroke-width="2"/>
   <circle cx="37" cy="40" r="3.5" fill="none" stroke="#5a4a20" stroke-width="1.4"/>
   <ellipse cx="38" cy="46" rx="4.5" ry="5" fill="#a08a40" stroke="#4a3a14" stroke-width=".8"/>
   <circle cx="38" cy="46" r="1" fill="#222"/>
   <path d="M7 18 L7 23.2 L11.6 55.7 L20 62 L86.6 80.4" stroke="#4a2a08" stroke-width=".8" fill="none"/>
  </svg>
  <div class="a" style="left:195px;top:148px;width:0;height:0"></div>
  <div class="t" style="left:199px;top:295px;font-size:6.9px;font-weight:bold;color:#1a1aa0;text-decoration:underline">Горячие клавиши</div>

 </div>


 <!-- msi logo -->
 <svg class="a" style="left:0;top:0" width="754" height="437">
  <path fill="#fafafa" d="M360.2 387.5 L369.6 360.2 L416.5 360.2 C421 360.2 423.2 362.5 422.3 366 L416.9 387.5 L405 387.5 L409.6 369.5 C410.3 366.8 408.5 366.4 406 366.4 C403 366.4 400.8 367.5 400 370 L393.8 387.5 L381.9 387.5 L388.3 369.3 C389 367 387.5 366.4 385.5 366.4 C382 366.4 380 367.5 379.1 369 L372.4 387.5 Z"/>
  <path fill="#fafafa" d="M431 360.2 L458.3 360.2 L456.2 365.1 L439.4 365.1 C436.5 365.1 436 368 438.5 369 L447.5 372.5 C455 375.5 452 387.5 444 387.5 L419.8 387.5 L421.9 382.6 L437.5 382.6 C440.5 382.6 441 379.6 438.5 378.6 L430 375.5 C421 372 424 360.2 431 360.2 Z"/>
  <path fill="#fafafa" d="M460.4 360.2 L471.6 360.2 L470.2 365.1 L459 365.1 Z M458.3 367.2 L469.5 367.2 L461.8 387.5 L449.2 387.5 Z"/>
  <text x="475.5" y="363.5" font-size="3.5" fill="#ddd" font-family="Liberation Sans">TM</text>
 </svg>
 <div class="t" style="left:482px;top:371.5px;font-size:20px;font-weight:normal;font-style:italic;color:#fafafa;-webkit-text-stroke:.55px #fafafa;transform-origin:0 0;transform:scaleX(1.295) skewX(-8deg)">innovation with style</div>
 <!-- desktop icons -->
 <svg class="a" style="left:660px;top:0" width="94" height="165">
  <!-- pdf -->
  <path d="M17 8 L32 8 L35.5 11.5 L35.5 32 L17 32Z" fill="#f8f8f8"/>
  <path d="M32 8 L32 11.5 L35.5 11.5Z" fill="#ccc"/>
  <rect x="12" y="10" width="17" height="7" fill="#d42a1a"/>
  <text x="15" y="16" font-size="5.5" font-weight="bold" fill="#fff" font-family="Liberation Sans">PDF</text>
  <path d="M20 28 C24 22 26 18 25 17 C23 17 25 24 31 26 C28 26 24 27 20 28Z" stroke="#d42a1a" stroke-width="1" fill="none"/>
  <!-- folder rabota -->
  <path d="M53.5 7.8 L68 9.5 L68 30 L55 31.3 Z" fill="#e8c860"/>
  <path d="M58.7 15.1 L71.5 17 L71.5 31 L58.7 31.3Z" fill="#7a6a48"/>
  <path d="M60 17 L66 16 L68 22 L62 24Z" fill="#c8b040"/>
  <path d="M62 24 L70 22 L71 30 L61 31Z" fill="#8a7050"/>
  <path d="M53.8 8.3 L58.7 11.3 L58.2 32.2 L55.2 29.6Z" fill="#f4e0a0"/>
  <!-- strahovka -->
  <path d="M15.5 64 L28 64 L32 68 L32 86 L15.5 86Z" fill="#f0f0f4"/>
  <path d="M28 64 L28 68 L32 68Z" fill="#c8c8d0"/>
  <!-- nastro vk -->
  <path d="M55 64 L68 64 L72.5 68 L72.5 86 L55 86Z" fill="#f0f0f4"/>
  <path d="M68 64 L68 68 L72.5 68Z" fill="#c8c8d0"/>
  <rect x="51.5" y="78" width="8.5" height="8.5" fill="#f4f6fa" stroke="#9aa" stroke-width=".4"/><path d="M53.5 85 C53.5 82 55 80.5 57.5 80.5 M55.5 79.5 L58.5 80.5 L56.5 82.5" stroke="#1a5ac8" stroke-width="1.5" fill="none"/>
  <!-- screenshots folder -->
  <path d="M13.7 116.6 L28 118 L28 139 L15 141 Z" fill="#e8c860"/>
  <path d="M18.5 123 L31.3 125 L31.3 140 L18.5 141Z" fill="#6a5848"/>
  <path d="M20 125 L30 126.5 L30 138 L21 139Z" fill="#a89070"/>
  <path d="M22 127 L29 128 L29 132 L22 131Z" fill="#f0f0f0"/>
  <path d="M14 117 L18.5 120 L18 141 L15 138.5Z" fill="#f4e0a0"/>
  <!-- nastro fb -->
  <path d="M55 119 L68 119 L72.5 123 L72.5 141 L55 141Z" fill="#f0f0f4"/>
  <path d="M68 119 L68 123 L72.5 123Z" fill="#c8c8d0"/>
  <rect x="51.5" y="133" width="8.5" height="8.5" fill="#f4f6fa" stroke="#9aa" stroke-width=".4"/><path d="M53.5 140 C53.5 137 55 135.5 57.5 135.5 M55.5 134.5 L58.5 135.5 L56.5 137.5" stroke="#1a5ac8" stroke-width="1.5" fill="none"/>
 </svg>
 <div class="t" style="left:654px;top:34.6px;width:60px;text-align:center;font-size:7px;color:#fff;transform:scaleX(.88);text-shadow:0 0 1.5px #000,0 1px 1px #000">интернет</div>
 <div class="t" style="left:654px;top:43.2px;width:60px;text-align:center;font-size:7px;color:#fff;transform:scaleX(.88);text-shadow:0 0 1.5px #000,0 1px 1px #000">Реквизиты</div>
 <div class="t" style="left:693.8px;top:34.7px;width:60px;text-align:center;font-size:7px;color:#fff;transform:scaleX(.88);text-shadow:0 0 1.5px #000,0 1px 1px #000">работа</div>
 <div class="t" style="left:654.5px;top:89.3px;width:60px;text-align:center;font-size:7px;color:#fff;transform:scaleX(.88);text-shadow:0 0 1.5px #000,0 1px 1px #000">Страховка</div>
 <div class="t" style="left:693px;top:89.1px;width:60px;text-align:center;font-size:7px;color:#fff;transform:scaleX(.88);text-shadow:0 0 1.5px #000,0 1px 1px #000">НАСТРО...</div>
 <div class="t" style="left:693.5px;top:98.1px;width:60px;text-align:center;font-size:7px;color:#fff;transform:scaleX(.88);text-shadow:0 0 1.5px #000,0 1px 1px #000">ВК</div>
 <div class="t" style="left:654.5px;top:144.1px;width:60px;text-align:center;font-size:7px;color:#fff;transform:scaleX(.88);text-shadow:0 0 1.5px #000,0 1px 1px #000">Скриншоты</div>
 <div class="t" style="left:693px;top:144.1px;width:60px;text-align:center;font-size:7px;color:#fff;transform:scaleX(.88);text-shadow:0 0 1.5px #000,0 1px 1px #000">НАСТРО...</div>
 <div class="t" style="left:693.5px;top:153.1px;width:60px;text-align:center;font-size:7px;color:#fff;transform:scaleX(.88);text-shadow:0 0 1.5px #000,0 1px 1px #000">ФБ</div>
 <!-- widget -->
 <div class="a" style="left:599px;top:408px;width:58px;height:17.5px;background:#050505;border:1px solid #4a4a4a"></div>
 <div class="a" style="left:601.5px;top:410px;width:12.5px;height:14px;background:#000;border:1px solid #333"></div>
 <div class="a" style="left:616.5px;top:410px;width:13.5px;height:14px;background:#000;border:1px solid #333"></div>
 <svg class="a" style="left:601px;top:410px" width="30" height="14">
  <path d="M5 4 L9.5 3 L8 12" stroke="#e81818" stroke-width="2" fill="none"/>
  <path d="M19 4 L21 3 L22 5 L24 4 M21 6 C24 6 25 9 22 10 C21 11 23 12 25 11 M21 10 L19 12" stroke="#20d820" stroke-width="1.4" fill="none"/>
 </svg>
 <div class="t" style="left:634px;top:411px;font-size:5.6px;line-height:7px;color:#e8e8e8">X 1100<br>Y 1100</div>
 <!-- taskbar -->
 <div id="taskbar" class="a" style="left:0;top:437px;width:754px;height:21px;background:linear-gradient(180deg,rgba(110,130,160,.5) 0,rgba(0,0,0,0) 1.5px),linear-gradient(90deg,#17294a 0,#162848 120px,#12203c 300px,#0f1626 520px,#0e1422 754px)">
  <div class="a" style="left:-4px;top:1px;width:13.5px;height:19px;border-radius:2px;background:linear-gradient(180deg,#52627a,#2a3a54);border:1px solid #6a7a90"></div>
  <div class="a" style="left:0;top:6px;width:2px;height:9px;background:#3a6ae0"></div>
  <div class="a" style="left:11px;top:1px;width:31px;height:19px;border-radius:2px;background:linear-gradient(180deg,#56667e 0,#3a4a62 50%,#2a3a52 100%);border:1px solid #707e92"></div>
  <div class="a" style="left:43.5px;top:1px;width:30.5px;height:19px;border-radius:2px;background:linear-gradient(180deg,#56667e 0,#3a4a62 50%,#2a3a52 100%);border:1px solid #707e92"></div>
  <div class="a" style="left:76px;top:1px;width:30px;height:19px;border-radius:2px;background:linear-gradient(180deg,#56667e 0,#3a4a62 50%,#2a3a52 100%);border:1px solid #707e92"></div>
  <svg class="a" style="left:0;top:0" width="120" height="21">
   <path d="M20 3 L31 3 L34 6 L34 18 L20 18Z" fill="#f0f4fa"/>
   <path d="M26 12 L34 12 L34 18 L28 18Z" fill="#c8d4e8"/>
   <text x="17.5" y="13.5" font-size="11" font-weight="bold" fill="#1a5ac8" font-family="Liberation Sans">W</text>
   <text x="50" y="16" font-size="10" font-weight="bold" font-style="italic" fill="#f0c020" font-family="Liberation Sans">R</text>
   <text x="56" y="17" font-size="7" font-weight="bold" font-style="italic" fill="#ccc" font-family="Liberation Sans">p</text>
   <text x="60" y="16" font-size="12" font-weight="bold" fill="#fff" font-family="Liberation Sans">3</text>
   <text x="83" y="16" font-size="10" font-weight="bold" font-style="italic" fill="#f0c020" font-family="Liberation Sans">R</text>
   <text x="89" y="17" font-size="7" font-weight="bold" font-style="italic" fill="#ccc" font-family="Liberation Sans">p</text>
   <text x="93" y="16" font-size="12" font-weight="bold" fill="#fff" font-family="Liberation Sans">3</text>
  </svg>
  <div class="t" style="left:655px;top:6.2px;font-size:6.3px;color:#d0d4dc">RU</div>
  <svg class="a" style="left:670px;top:0" width="40" height="21">
   <path d="M2 12 L4 10 L6 12Z" fill="#e8e8f0"/>
   <path d="M13.5 7 L13.5 15" stroke="#e0e0e8" stroke-width="1.2"/>
   <path d="M14 7 L17 7 L17.5 8 L19.5 8 L19 11 L14 11Z" fill="#e0e0e8"/>
   <path d="M27 8 L32 8 L32 12.5 L26 12.5 L26 10" stroke="#d8dce4" stroke-width="1.1" fill="none"/>
   <circle cx="26" cy="8" r="1.2" fill="#d8dce4"/>
   <path d="M27 14 L31 14" stroke="#d8dce4" stroke-width="1"/>
  </svg>
  <div class="t" style="left:711px;top:2.6px;width:30px;text-align:center;font-size:6.2px;line-height:8.6px;color:#e8ecf4">19:38<br>06.03.2018</div>
  <div class="a" style="left:747px;top:0;width:7px;height:21px;background:linear-gradient(180deg,#3a4658,#141c2a 40%,#0c1220);border-left:1px solid #5a6678;border-top:1px solid #6a7688"></div>
 </div>
</div>
</body></html>
